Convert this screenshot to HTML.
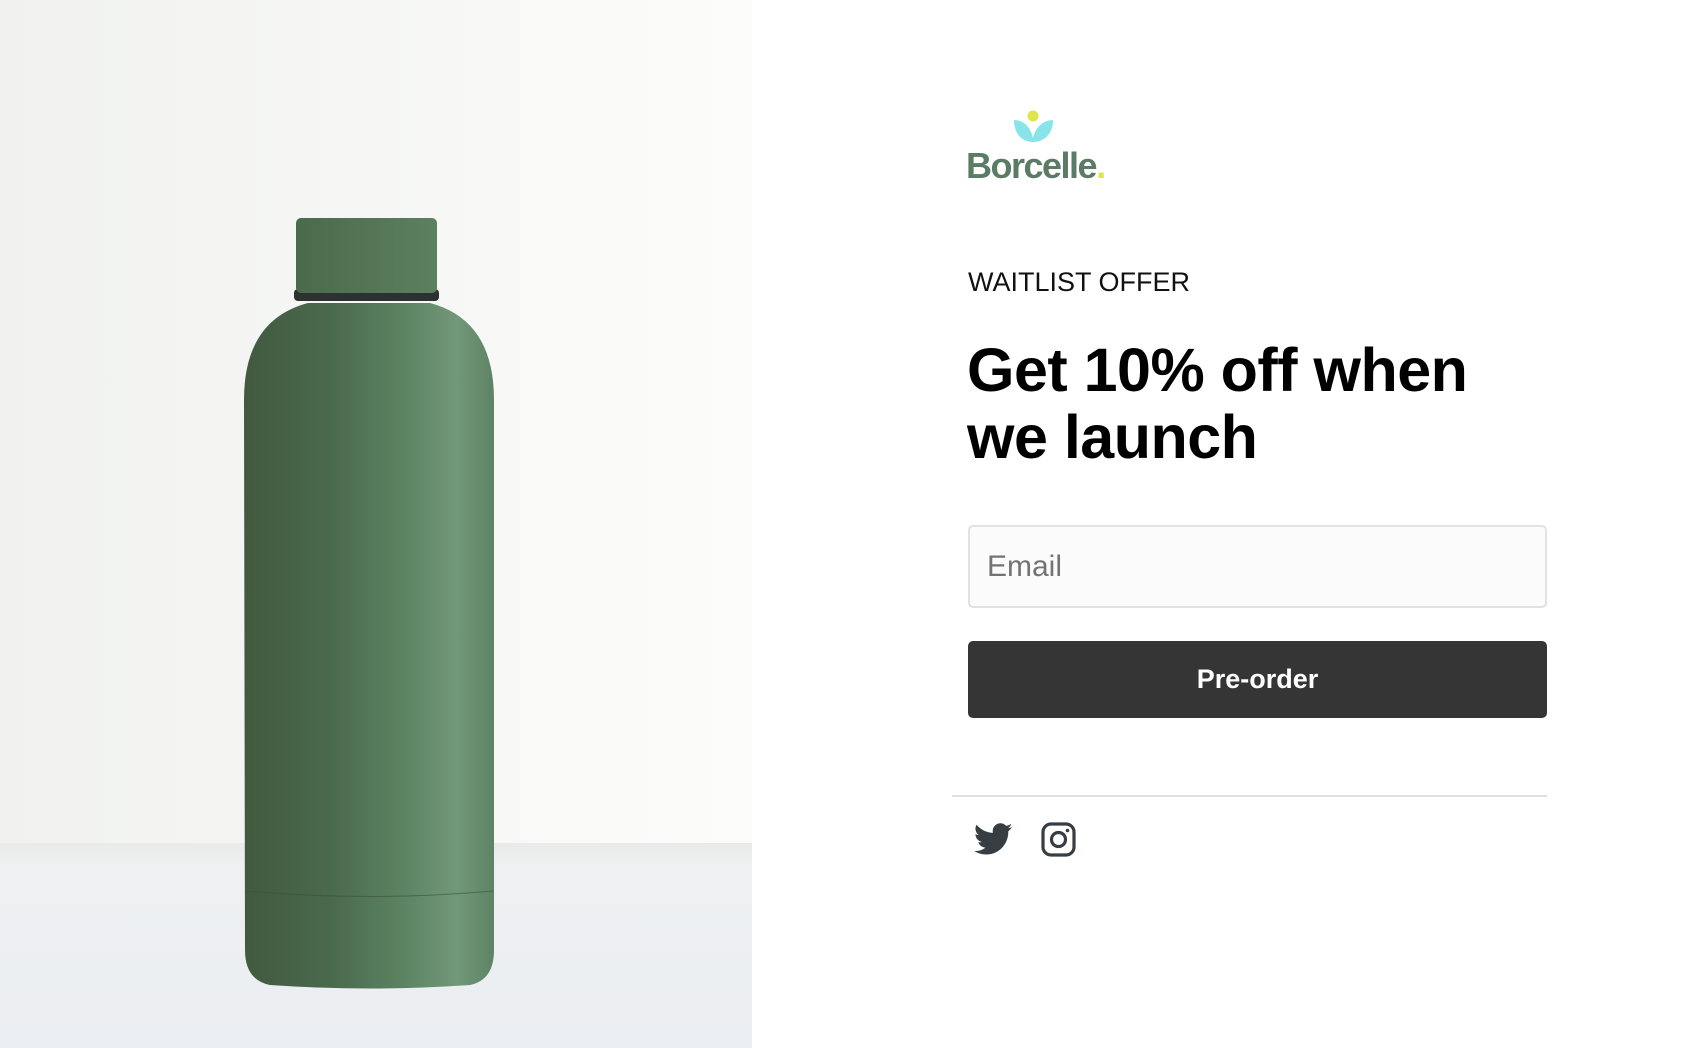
<!DOCTYPE html>
<html><head><meta charset="utf-8"><style>
*{margin:0;padding:0;box-sizing:border-box}
body{width:1706px;height:1048px;overflow:hidden;background:#fff;font-family:"Liberation Sans",sans-serif;position:relative}
.photo{position:absolute;left:0;top:0;width:752px;height:1048px;background:linear-gradient(90deg,#f1f2f0 0%,#f6f7f5 50%,#fcfcfb 100%);overflow:hidden}
.floor{position:absolute;left:0;top:843px;width:752px;height:205px;background:linear-gradient(180deg,#e9ebea 0%,#eef0f2 12%,#ebeef2 100%)}
.abs{position:absolute}
</style></head><body>
<div class="photo">
<div class="floor"></div>
<svg class="abs" style="left:0;top:0" width="752" height="1048">
<defs>
<linearGradient id="bg" x1="0" x2="1" y1="0" y2="0">
<stop offset="0" stop-color="#41593f"/><stop offset="0.35" stop-color="#4a6a4d"/><stop offset="0.65" stop-color="#5d8463"/><stop offset="0.85" stop-color="#72987a"/><stop offset="1" stop-color="#5e8264"/>
</linearGradient>
<linearGradient id="cg" x1="0" x2="1"><stop offset="0" stop-color="#4a6a4b"/><stop offset="1" stop-color="#5c8060"/></linearGradient>
</defs>
<path d="M270 985 Q245 980 245 950 L244 400 Q244 320 308 303 L430 303 Q494 320 494 400 L494 950 Q494 980 470 985 Q370 992 270 985 Z" fill="url(#bg)"/>
<path d="M246 891 Q370 902 493 891" stroke="#3a5040" stroke-width="1" fill="none" opacity=".6"/>
<rect x="294" y="289" width="145" height="12" rx="4" fill="#2d3230"/>
<rect x="296" y="218" width="141" height="75" rx="5" fill="url(#cg)"/>
</svg>
</div>

<svg class="abs" style="left:1012px;top:108px" width="48" height="38" viewBox="0 0 48 38">
<circle cx="21" cy="8" r="5.5" fill="#dde54c"/>
<path d="M21 34 C10 34 2 26 2 12 C12 12 19 20 21 30 Z" fill="#86e4ea"/>
<path d="M21 34 C32 34 41 26 41 12 C31 12 23 20 21 30 Z" fill="#86e4ea"/>
</svg>
<div class="abs" style="left:966px;top:146px;font-size:36px;font-weight:bold;color:#5b7b65;letter-spacing:-1.5px;line-height:40px">Borcelle<span style="color:#dde54c">.</span></div>

<div class="abs" style="left:968px;top:267px;font-size:27px;color:#111;line-height:30px">WAITLIST OFFER</div>
<div class="abs" style="left:967px;top:337px;font-size:61px;font-weight:bold;color:#000;line-height:67px;letter-spacing:-0.5px">Get 10% off when<br>we launch</div>

<div class="abs" style="left:968px;top:525px;width:579px;height:83px;border:2px solid #e2e2e6;border-radius:5px;background:#fbfbfb"></div>
<div class="abs" style="left:987px;top:549px;font-size:30px;color:#737373;line-height:36px">Email</div>

<div class="abs" style="left:968px;top:641px;width:579px;height:77px;background:#353535;border-radius:5px;color:#fff;font-weight:bold;font-size:27px;text-align:center;line-height:77px">Pre-order</div>

<div class="abs" style="left:952px;top:795px;width:595px;height:2px;background:#dfdfe2"></div>

<svg class="abs" style="left:974px;top:823px" width="39" height="33" viewBox="0 0 24 20">
<path fill="#363d43" d="M23.6 2.3c-.9.4-1.8.6-2.8.8 1-.6 1.8-1.5 2.1-2.7-.9.6-2 1-3.1 1.2C18.9.6 17.6 0 16.3 0c-2.7 0-4.8 2.2-4.8 4.8 0 .4 0 .8.1 1.1C7.5 5.7 4 3.8 1.6.9c-.4.7-.7 1.6-.7 2.4 0 1.7.9 3.2 2.2 4-.8 0-1.5-.2-2.2-.6v.1c0 2.3 1.7 4.3 3.9 4.7-.4.1-.8.2-1.3.2-.3 0-.6 0-.9-.1.6 1.9 2.4 3.3 4.5 3.4-1.7 1.3-3.7 2.1-6 2.1-.4 0-.8 0-1.1-.1 2.1 1.4 4.7 2.2 7.4 2.2 8.9 0 13.7-7.4 13.7-13.7v-.6c.9-.7 1.7-1.5 2.3-2.6z"/>
</svg>
<svg class="abs" style="left:1040px;top:821px" width="37" height="37" viewBox="0 0 37 37">
<rect x="3" y="3" width="31" height="31" rx="8" fill="none" stroke="#363d43" stroke-width="3.2"/>
<circle cx="18.5" cy="18.5" r="7" fill="none" stroke="#363d43" stroke-width="3.2"/>
<circle cx="27.5" cy="9.5" r="1.8" fill="#363d43"/>
</svg>
</body></html>
